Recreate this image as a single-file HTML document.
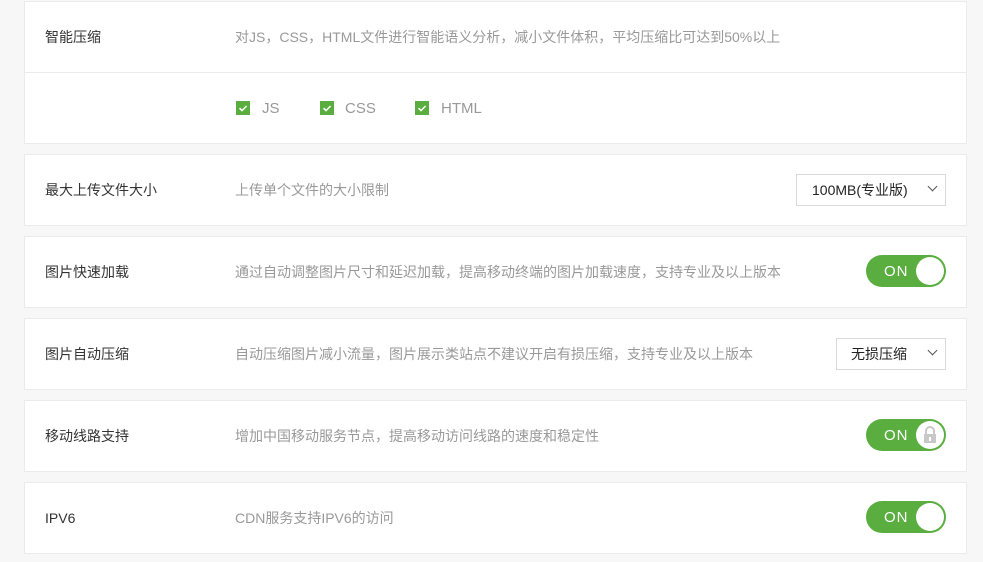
<!DOCTYPE html>
<html><head><meta charset="utf-8"><style>
*{margin:0;padding:0;box-sizing:border-box}
body{width:983px;height:562px;background:#f7f7f7;font-family:"Liberation Sans","Noto Sans CJK SC",sans-serif;position:relative;overflow:hidden}
.card{position:absolute;left:24px;width:943px;background:#fff;border:1px solid #ebebeb}
.row{position:relative;height:70px}
.lab{position:absolute;left:20px;top:0;line-height:70px;font-size:14px;color:#333}
.desc{position:absolute;left:210px;top:0;line-height:70px;font-size:14px;color:#999}
.div{border-top:1px solid #ebebeb}
.cb{position:absolute;top:28px;width:14px;height:14px;background:#5aae3f}
.cbl{position:absolute;top:1px;line-height:70px;font-size:15px;color:#999}
.tg{position:absolute;left:841px;top:18px;width:80px;height:32px;border-radius:16px;background:#5aae3f}
.tg span{position:absolute;left:18px;top:1px;line-height:32px;color:#fff;font-size:15px;letter-spacing:1px}
.tg i{position:absolute;right:2px;top:2px;width:28px;height:28px;border-radius:50%;background:#fff}
.sel{position:absolute;top:19px;height:32px;border:1px solid #d9d9d9;background:#fff;font-size:14px;color:#222;line-height:30px}
.sel b{position:absolute;right:9px;top:8px;width:7px;height:7px;border-right:1.3px solid #555;border-bottom:1.3px solid #555;transform:rotate(45deg)}
</style></head><body>
<div class="card" style="top:1px;height:143px">
 <div class="row"><div class="lab">智能压缩</div><div class="desc">对JS，CSS，HTML文件进行智能语义分析，减小文件体积，平均压缩比可达到50%以上</div></div>
 <div class="row div">
  <svg class="cb" style="left:211px" viewBox="0 0 14 14"><path d="M3.5 7.2l2.5 2.4 4.6-4.6" fill="none" stroke="#fff" stroke-width="1.5"/></svg><div class="cbl" style="left:237px">JS</div>
  <svg class="cb" style="left:295px" viewBox="0 0 14 14"><path d="M3.5 7.2l2.5 2.4 4.6-4.6" fill="none" stroke="#fff" stroke-width="1.5"/></svg><div class="cbl" style="left:320px">CSS</div>
  <svg class="cb" style="left:390px" viewBox="0 0 14 14"><path d="M3.5 7.2l2.5 2.4 4.6-4.6" fill="none" stroke="#fff" stroke-width="1.5"/></svg><div class="cbl" style="left:416px">HTML</div>
 </div>
</div>
<div class="card" style="top:154px;height:72px"><div class="row">
 <div class="lab">最大上传文件大小</div><div class="desc">上传单个文件的大小限制</div>
 <div class="sel" style="left:771px;width:150px;padding-left:15px">100MB(专业版)<b></b></div></div></div>
<div class="card" style="top:236px;height:72px"><div class="row">
 <div class="lab">图片快速加载</div><div class="desc">通过自动调整图片尺寸和延迟加载，提高移动终端的图片加载速度，支持专业及以上版本</div>
 <div class="tg"><span>ON</span><i></i></div></div></div>
<div class="card" style="top:318px;height:72px"><div class="row">
 <div class="lab">图片自动压缩</div><div class="desc">自动压缩图片减小流量，图片展示类站点不建议开启有损压缩，支持专业及以上版本</div>
 <div class="sel" style="left:811px;width:110px;padding-left:14px">无损压缩<b></b></div></div></div>
<div class="card" style="top:400px;height:72px"><div class="row">
 <div class="lab">移动线路支持</div><div class="desc">增加中国移动服务节点，提高移动访问线路的速度和稳定性</div>
 <div class="tg"><span>ON</span><i><svg width="28" height="28" viewBox="0 0 28 28"><path d="M10 13v-3a4 4 0 0 1 8 0v3" fill="none" stroke="#c8c8c8" stroke-width="2"/><rect x="8" y="13" width="12" height="9" fill="#c8c8c8"/><rect x="13" y="16" width="2" height="4" fill="#fff"/></svg></i></div></div></div>
<div class="card" style="top:482px;height:72px"><div class="row">
 <div class="lab">IPV6</div><div class="desc">CDN服务支持IPV6的访问</div>
 <div class="tg"><span>ON</span><i></i></div></div></div>
</body></html>
